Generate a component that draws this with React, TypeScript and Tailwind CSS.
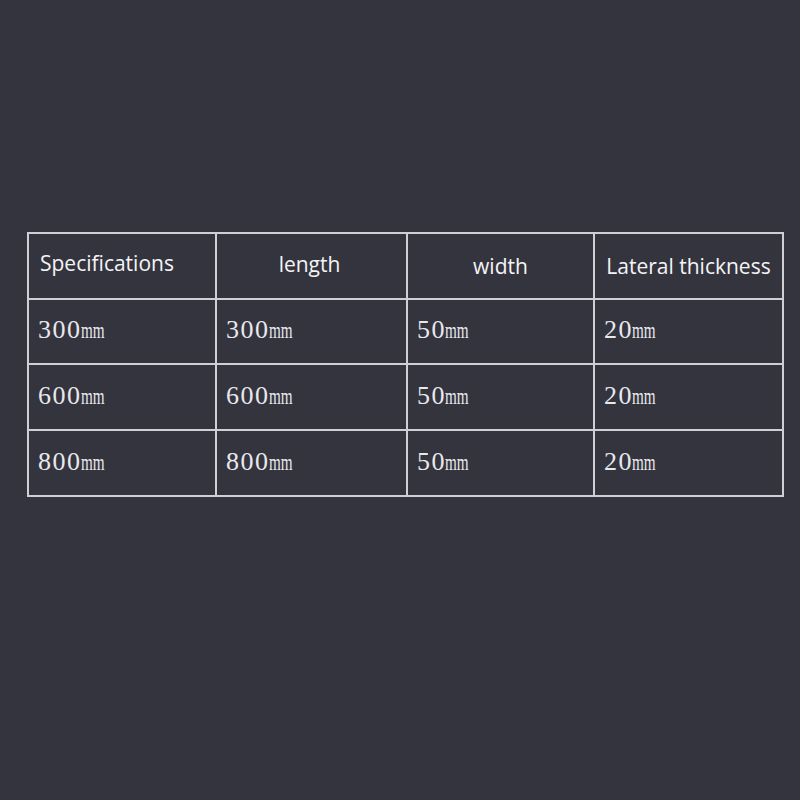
const headers = [
  { label: "Specifications", align: "text-left pl-[11px]", pad: "pb-[5px]" },
  { label: "length", align: "text-center pr-[4px]", pad: "pb-[3px]" },
  { label: "width", align: "text-center", pad: "pt-[1px]" },
  { label: "Lateral thickness", align: "text-center", pad: "pt-[1px]" },
];

const rows = [
  ["300", "300", "50", "20"],
  ["600", "600", "50", "20"],
  ["800", "800", "50", "20"],
];

function Size({ value }: { value: string }) {
  return (
    <span className="inline-flex items-baseline text-[#e8e8ec]">
      <span className="font-['Liberation_Serif',serif] text-[26px] tracking-[1.5px]">
        {value}
      </span>
      <span className="inline-block origin-left scale-x-[0.66] font-['Liberation_Serif',serif] text-[23px] -ml-[1px]">
        mm
      </span>
    </span>
  );
}

export default function App() {
  return (
    <div className="min-h-[800px] w-[800px] bg-[#34343e] pt-[232px] pl-[27px]">
      <table className="w-[755px] table-fixed border-collapse border-2 border-[#cfcfd6]">
        <colgroup>
          <col className="w-[188px]" />
          <col className="w-[191px]" />
          <col className="w-[187px]" />
          <col className="w-[189px]" />
        </colgroup>
        <thead>
          <tr className="h-[66px]">
            {headers.map((h) => (
              <th
                key={h.label}
                className={`border-2 border-[#cfcfd6] font-normal whitespace-nowrap font-['Open_Sans',sans-serif] text-[21px] text-[#f4f4f6] ${h.align} ${h.pad}`}
              >
                {h.label}
              </th>
            ))}
          </tr>
        </thead>
        <tbody>
          {rows.map((row, i) => (
            <tr key={i} className={i === 0 ? "h-[65px]" : "h-[66px]"}>
              {row.map((cell, j) => (
                <td
                  key={j}
                  className="border-2 border-[#cfcfd6] pl-[9px] pb-[4px] align-middle whitespace-nowrap"
                >
                  <Size value={cell} />
                </td>
              ))}
            </tr>
          ))}
        </tbody>
      </table>
    </div>
  );
}
